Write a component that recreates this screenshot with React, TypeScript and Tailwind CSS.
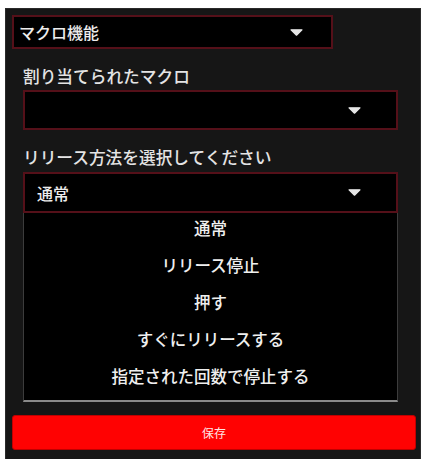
import React from "react";

const FONT = { fontFamily: '"Noto Sans CJK JP", "Noto Sans", sans-serif' };

function Arrow() {
  return (
    <svg width="13" height="7" viewBox="0 0 13 7" className="shrink-0">
      <polygon points="1,0.8 12,0.8 6.5,6.2" fill="#e6e6e6" stroke="#e6e6e6" strokeWidth="1.2" strokeLinejoin="round" />
    </svg>
  );
}

const options = ["通常", "リリース停止", "押す", "すぐにリリースする", "指定された回数で停止する"];

export default function App() {
  return (
    <div className="flex h-[459px] w-[426px] flex-col bg-white px-[5px] pt-[8px]" style={FONT}>
      <div className="flex flex-1 flex-col border-x border-t border-[#2a2a2a] bg-[#161616] pt-[6px]">
        {/* top select */}
        <div className="ml-[6px] flex h-[34px] w-[321px] items-center justify-between border-2 border-[#551019] bg-black pl-[5px] pr-[28px]">
          <span className="text-[16px] font-medium leading-none text-[#ededed]">マクロ機能</span>
          <Arrow />
        </div>

        <div className="ml-[17px] mt-[15px] h-[24px] text-[16.7px] font-medium leading-[24px] text-[#e4e4e4]">割り当てられたマクロ</div>

        <div className="ml-[17px] mt-[2px] flex h-[40px] w-[375px] items-center justify-end border-2 border-[#551019] bg-black pr-[35px]">
          <Arrow />
        </div>

        <div className="ml-[17px] mt-[15px] h-[24px] text-[16.7px] font-medium leading-[24px] text-[#e4e4e4]">リリース方法を選択してください</div>

        <div className="ml-[17px] mt-[3px] flex h-[41px] w-[375px] items-center justify-between border-2 border-[#551019] bg-black pl-[12px] pr-[35px]">
          <span className="text-[16px] font-medium leading-none text-[#ededed]">通常</span>
          <Arrow />
        </div>

        {/* open list */}
        <div className="ml-[17px] flex w-[375px] flex-col border-x border-b-2 border-x-[#3c3c3c] border-b-[#8a8a8a] bg-black pb-[2px]">
          {options.map((o) => (
            <div key={o} className="flex h-[37px] justify-center text-[16.5px] font-medium leading-[30px] text-[#efefef]">
              {o}
            </div>
          ))}
        </div>

        <button className="ml-[6px] mt-[13px] flex h-[35px] w-[404px] items-center justify-center rounded-[3px] border border-[#c00000] bg-[#ff0202] text-[12px] text-[#ffe4e4]">
          保存
        </button>
      </div>
    </div>
  );
}
